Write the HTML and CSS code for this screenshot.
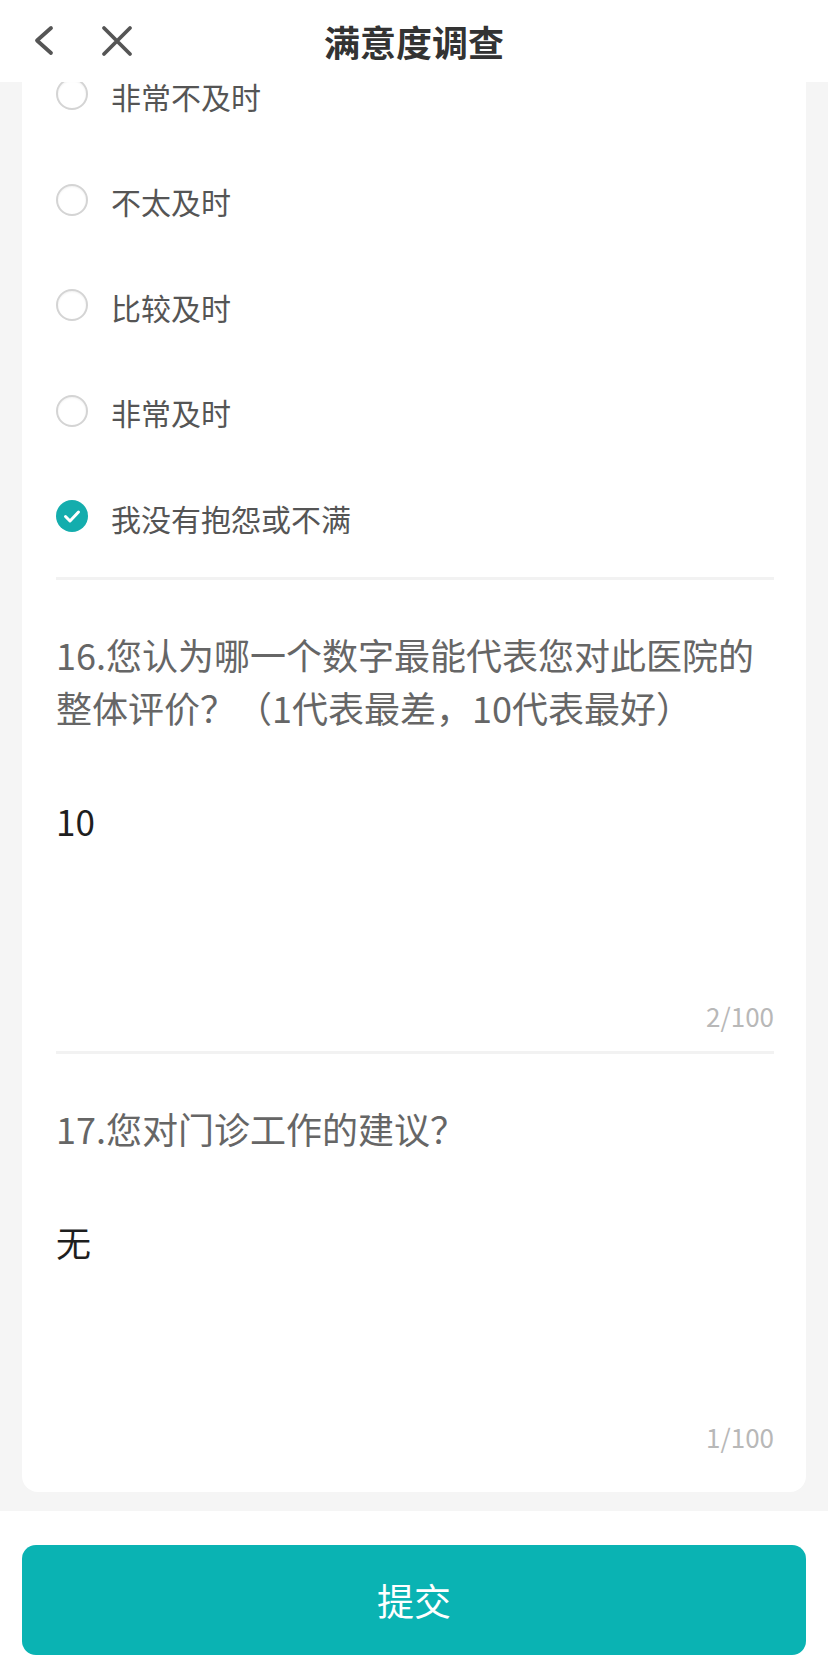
FILE: index.html
```html
<!DOCTYPE html>
<html lang="zh-CN">
<head>
<meta charset="utf-8">
<title>满意度调查</title>
<link rel="stylesheet" href="styles.css">
</head>
<body>
<header class="topbar">
  <div class="topbar-left">
    <svg class="icon-back" width="24" height="32" viewBox="0 0 24 32" aria-hidden="true">
      <path d="M21 3 L7 15.5 L21 28" fill="none" stroke="#555" stroke-width="3.8" stroke-linecap="round" stroke-linejoin="round"/>
    </svg>
    <svg class="icon-close" width="36" height="36" viewBox="0 0 36 36" aria-hidden="true">
      <path d="M5 5 L31 31 M31 5 L5 31" fill="none" stroke="#555" stroke-width="3.8" stroke-linecap="round"/>
    </svg>
  </div>
  <h1 class="topbar-title">满意度调查</h1>
  <div class="topbar-right"></div>
</header>

<main class="page">
  <section class="card">
    <ul class="options">
      <li class="option"><span class="radio"></span><span class="option-label">非常不及时</span></li>
      <li class="option"><span class="radio"></span><span class="option-label">不太及时</span></li>
      <li class="option"><span class="radio"></span><span class="option-label">比较及时</span></li>
      <li class="option"><span class="radio"></span><span class="option-label">非常及时</span></li>
      <li class="option"><span class="radio radio-checked">
        <svg width="32" height="32" viewBox="0 0 32 32" aria-hidden="true"><path d="M9.5 16.5 L14 21 L22.5 12" fill="none" stroke="#fff" stroke-width="3" stroke-linecap="round" stroke-linejoin="round"/></svg>
      </span><span class="option-label">我没有抱怨或不满</span></li>
    </ul>

    <div class="question">
      <p class="question-title">16.您认为哪一个数字最能代表您对此医院的整体评价？（1代表最差，10代表最好）</p>
      <div class="answer">10</div>
      <div class="counter">2/100</div>
    </div>

    <div class="question question-last">
      <p class="question-title">17.您对门诊工作的建议？</p>
      <div class="answer">无</div>
      <div class="counter">1/100</div>
    </div>
  </section>
</main>

<footer class="actions">
  <button class="submit" type="button">提交</button>
</footer>
</body>
</html>
```

FILE: styles.css
```css
* { box-sizing: border-box; }

html, body {
  margin: 0;
  padding: 0;
}

body {
  background: #f5f5f5;
  font-family: "Noto Sans CJK SC", "Noto Sans", sans-serif;
  color: #333;
}

.topbar {
  position: fixed;
  top: 0;
  left: 0;
  right: 0;
  height: 82px;
  background: #fff;
  display: grid;
  grid-template-columns: 1fr auto 1fr;
  align-items: center;
  z-index: 10;
}

.topbar-left {
  display: flex;
  align-items: center;
  padding-left: 30px;
  gap: 45px;
}

.icon-back, .icon-close { display: block; }

.topbar-title {
  margin: 0;
  font-size: 36px;
  font-weight: 700;
  color: #333;
  line-height: 1;
}

.page {
  padding: 0 22px 19.5px;
}

.card {
  background: #fff;
  border-radius: 0 0 16px 16px;
  padding: 43px 32px 40px 34px;
}

.options {
  list-style: none;
  margin: 0;
  padding: 0 0 6px;
}

.option {
  height: 105.5px;
  display: flex;
  align-items: center;
  gap: 23px;
}

.radio {
  width: 32px;
  height: 32px;
  border-radius: 50%;
  border: 2px solid #d4d4d4;
  background: #fff;
  box-shadow: inset 0 1px 2px rgba(0,0,0,0.06);
  margin-bottom: 3px;
  flex: none;
  display: flex;
  align-items: center;
  justify-content: center;
}

.radio-checked {
  border: none;
  background: #14adad;
  box-shadow: none;
}

.radio-checked svg { display: block; }

.option-label {
  font-size: 30px;
  line-height: 1;
  color: #555;
}

.question {
  border-top: 3px solid #f2f2f2;
  padding: 48px 0 20px;
}

.question-last {
  padding-bottom: 0;
}

.question-title {
  margin: 0;
  font-size: 36px;
  line-height: 53px;
  color: #666;
}

.answer {
  margin-top: 62px;
  min-height: 205px;
  font-size: 35px;
  line-height: 50px;
  color: #1e1e1e;
}

.counter {
  text-align: right;
  font-size: 26px;
  line-height: 30px;
  color: #b8b8b8;
}

.actions {
  background: #fff;
  padding: 34px 22px 2px;
}

.submit {
  display: block;
  width: 100%;
  height: 110px;
  border: none;
  border-radius: 14px;
  background: #0ab3b3;
  color: #fff;
  font-family: "Noto Sans CJK SC", "Noto Sans", sans-serif;
  font-size: 37px;
  padding: 0;
}
```
